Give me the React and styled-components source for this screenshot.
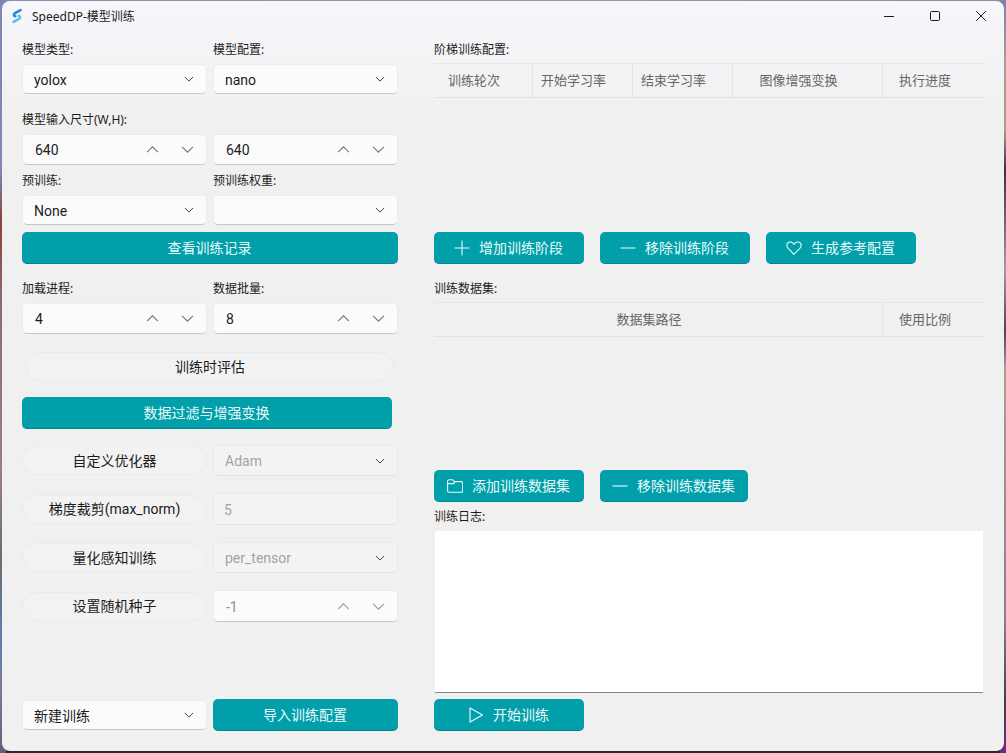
import React from 'react';
import styled, { createGlobalStyle } from 'styled-components';

const Global = createGlobalStyle`
  html, body { margin: 0; padding: 0; height: 100%; }
  body {
    width: 1006px; height: 753px; overflow: hidden;
    background-color: #2a2830;
    background-image:
      linear-gradient(to bottom, #7f86b5 0, #7f86b5 170px, #8c3f40 220px, #8e6a6a 300px, #9a8080 470px, #6d6d6d 560px, #5a7fb0 640px, #7b7a9a 690px, #6b5a7a 753px),
      linear-gradient(to bottom, #7a80b0 0, #a89e90 60px, #a89e90 130px, #3a3040 170px, #a89a9a 270px, #5a3a60 330px, #b09a9a 370px, #8a8080 620px, #404050 700px, #6a2a80 753px),
      linear-gradient(to right, #8a8ea8, #9a98a8 50%, #8a8ea8);
    background-repeat: no-repeat;
    background-size: 6px 753px, 6px 753px, 1006px 6px;
    background-position: left top, right top, left top;
    font-family: "Noto Sans", "Noto Sans CJK SC", sans-serif;
  }
  * { box-sizing: border-box; }
`;

const Win = styled.div`
  margin: 1px 2px 2px 2px; width: 1002px; height: 750px;
  display: flex; flex-direction: column; border-radius: 8px; overflow: hidden;
  background: linear-gradient(to bottom, #f6f6fb 0, #f3f3f5 70px, #f0f0f0 130px);
`;
const TitleBar = styled.header`
  height: 30px; display: flex; align-items: center; padding-left: 10px; flex: none;
`;
const TitleText = styled.span`
  margin-left: 10px; font-size: 12px; color: #1a1a1a; flex: 1;
`;
const WinBtn = styled.div`
  width: 46px; height: 30px; display: flex; align-items: center; justify-content: center; color: #1c1c1c;
`;
const Main = styled.main`
  flex: 1; display: flex; gap: 36px; padding: 9px 19px 20px 20px; min-height: 0;
`;
const LeftCol = styled.section`
  width: 376px; display: flex; flex-direction: column; flex: none;
`;
const RightCol = styled.section`
  width: 551px; display: flex; flex-direction: column; flex: none;
`;
const Pair = styled.div`
  display: grid; grid-template-columns: 185px 185px; column-gap: 6px; margin-top: ${p => p.$mt || 0}px;
`;
const Label = styled.label`
  display: block; height: 18px; line-height: 20px; font-size: 12px; color: #1c1c1c; margin-bottom: ${p => p.$mb ?? 6}px;
`;
const Control = styled.div`
  height: ${p => p.$h || 30}px; display: flex; align-items: center; border-radius: 5px;
  background: ${p => (p.$off ? '#f3f3f3' : '#fbfbfb')};
  border: 1px solid ${p => (p.$off ? '#e9e9e9' : '#ececec')};
  border-bottom-color: ${p => (p.$off ? '#e2e2e2' : '#c6c6c6')};
  font-family: Roboto, "Noto Sans CJK SC", sans-serif;
  font-size: 14px; color: ${p => (p.$off ? '#a3a3a3' : '#1c1c1c')};
`;
const Value = styled.span`
  flex: 1; padding: 1px 0 0 ${p => p.$pl || 11}px; line-height: 1; color: ${p => p.$tone || 'inherit'};
`;
const Caret = styled.span`
  width: 34px; flex: none; display: flex; justify-content: center; color: #444;
`;
const SpinBtn = styled.span`
  width: 35px; flex: none; display: flex; justify-content: center; color: ${p => (p.$off ? '#9b9b9b' : '#777')};
`;
const SpinPad = styled.span` width: 1px; flex: none; `;
const Primary = styled.button`
  height: 32px; width: ${p => (p.$w ? `${p.$w}px` : '100%')}; flex: none; margin-top: ${p => p.$mt || 0}px;
  display: flex; align-items: center; justify-content: center; gap: 9px;
  border: 0; border-bottom: 1px solid #07858f; border-radius: 5px; padding: 0 1px 2px 0;
  background: #009faa; color: #e9fbfb; font: inherit; font-size: 14px;
  svg { margin-top: 2px; }
`;
const Pill = styled.div`
  height: ${p => p.$h || 29}px; border-radius: 15px; display: flex; align-items: center; justify-content: center;
  background: #f2f2f2; border: 1px solid #ebebeb; font-family: Roboto, "Noto Sans CJK SC", sans-serif;
  font-size: 14px; color: #1c1c1c; padding-bottom: 2px;
  margin: ${p => p.$m || '0'};
`;
const OptRow = styled.div`
  display: grid; grid-template-columns: 185px 185px; column-gap: 6px; align-items: center; margin-top: ${p => p.$mt || 0}px;
`;
const Footer = styled.div`
  margin-top: auto; display: grid; grid-template-columns: 185px 185px; column-gap: 6px; align-items: center;
`;
const TableWrap = styled.div`
  height: ${p => p.$h}px; flex: none;
`;
const Head = styled.div`
  display: grid; grid-template-columns: ${p => p.$cols}; height: 35px;
  border-top: 1px solid #e6e6e6; border-bottom: 1px solid #e2e2e2;
`;
const HeadCell = styled.div`
  display: flex; align-items: center; justify-content: center; padding: 0 18px 3px 0;
  font-size: 13px; color: #666; border-right: 1px solid #e4e4e4;
  &:last-child { border-right: 0; }
`;
const BtnRow = styled.div`
  display: flex; gap: 16px; flex: none; margin-bottom: ${p => p.$mb || 0}px;
`;
const Log = styled.div`
  flex: 1; background: #fff; border-bottom: 1px solid #868686; margin: 0 2px 6px 1px; min-height: 0;
`;

const Chevron = ({ up, size = 10 }) => (
  <svg width={size} height={size} viewBox="0 0 12 12" fill="none" stroke="currentColor" strokeWidth={size > 10 ? 1 : 1.2}>
    <path d={up ? 'M1 8.5 6 3.5l5 5' : 'M1 3.5 6 8.5l5-5'} />
  </svg>
);
const Ico = ({ children }) => (
  <svg width="16" height="16" viewBox="0 0 16 16" fill="none" stroke="currentColor" strokeWidth="1.1">{children}</svg>
);

const Select = ({ value, off, h }) => (
  <Control $off={off} $h={h}>
    <Value>{value}</Value>
    <Caret><Chevron /></Caret>
  </Control>
);
const Spin = ({ value, off }) => (
  <Control $h={off ? 32 : 31}>
    <Value $pl={12} $tone={off ? '#8e8e8e' : undefined}>{value}</Value>
    <SpinBtn $off={off}><Chevron up size={13} /></SpinBtn>
    <SpinBtn $off={off}><Chevron size={13} /></SpinBtn>
    <SpinPad />
  </Control>
);

export default function App() {
  return (
    <>
      <Global />
      <Win>
        <TitleBar>
          <svg width="10" height="16" viewBox="0 0 10 16" fill="none" strokeLinecap="round">
            <path d="M8.5 2.2 3 5.2c-1.6 1-1.4 2.4.2 3" stroke="#2f86d6" strokeWidth="2.6" />
            <path d="M1.6 13.8 7 10.8c1.6-1 1.4-2.4-.2-3" stroke="#56c6ee" strokeWidth="2.6" />
          </svg>
          <TitleText>SpeedDP-模型训练</TitleText>
          <WinBtn>
            <svg width="10" height="10" viewBox="0 0 10 10" stroke="currentColor"><path d="M0 5.5h10" /></svg>
          </WinBtn>
          <WinBtn>
            <svg width="10" height="10" viewBox="0 0 10 10" fill="none" stroke="currentColor"><rect x=".5" y=".5" width="9" height="9" rx="1" /></svg>
          </WinBtn>
          <WinBtn>
            <svg width="10" height="10" viewBox="0 0 10 10" stroke="currentColor"><path d="M.3.3l9.4 9.4M9.7.3.3 9.7" /></svg>
          </WinBtn>
        </TitleBar>
        <Main>
          <LeftCol>
            <Pair>
              <div><Label>模型类型:</Label><Select value="yolox" /></div>
              <div><Label>模型配置:</Label><Select value="nano" /></div>
            </Pair>
            <Pair $mt={16}>
              <div><Label>模型输入尺寸(W,H):</Label><Spin value="640" /></div>
              <div><Label>&nbsp;</Label><Spin value="640" /></div>
            </Pair>
            <Pair $mt={6}>
              <div><Label>预训练:</Label><Select value="None" /></div>
              <div><Label>预训练权重:</Label><Select value="" /></div>
            </Pair>
            <Primary $mt={7}>查看训练记录</Primary>
            <Pair $mt={15}>
              <div><Label>加载进程:</Label><Spin value="4" /></div>
              <div><Label>数据批量:</Label><Spin value="8" /></div>
            </Pair>
            <Pill $h={29} $m="18px 4px 0 4px">训练时评估</Pill>
            <Primary $mt={16} $w={370}>数据过滤与增强变换</Primary>
            <OptRow $mt={16}>
              <Pill>自定义优化器</Pill>
              <Select value="Adam" off h={31} />
            </OptRow>
            <OptRow $mt={17}>
              <Pill>梯度裁剪(max_norm)</Pill>
              <Control $off $h={32}><Value $pl={10}>5</Value></Control>
            </OptRow>
            <OptRow $mt={17}>
              <Pill>量化感知训练</Pill>
              <Select value="per_tensor" off h={31} />
            </OptRow>
            <OptRow $mt={17}>
              <Pill>设置随机种子</Pill>
              <Spin value="-1" off />
            </OptRow>
            <Footer>
              <Select value="新建训练" />
              <Primary>导入训练配置</Primary>
            </Footer>
          </LeftCol>
          <RightCol>
            <Label $mb={5}>阶梯训练配置:</Label>
            <TableWrap $h={169}>
              <Head $cols="99px 100px 100px 150px 102px">
                <HeadCell>训练轮次</HeadCell>
                <HeadCell>开始学习率</HeadCell>
                <HeadCell>结束学习率</HeadCell>
                <HeadCell>图像增强变换</HeadCell>
                <HeadCell>执行进度</HeadCell>
              </Head>
            </TableWrap>
            <BtnRow $mb={15}>
              <Primary $w={150}>
                <Ico><path d="M8 .5v15M.5 8h15" /></Ico>增加训练阶段
              </Primary>
              <Primary $w={150}>
                <Ico><path d="M.5 8h15" /></Ico>移除训练阶段
              </Primary>
              <Primary $w={150}>
                <Ico><path d="M8 14.3 2 8.2C.4 6.5.5 4 2 2.7c1.6-1.3 4.2-1 6 1.6 1.8-2.6 4.4-2.9 6-1.6 1.5 1.3 1.6 3.8 0 5.5z" /></Ico>生成参考配置
              </Primary>
            </BtnRow>
            <Label $mb={5}>训练数据集:</Label>
            <TableWrap $h={168}>
              <Head $cols="449px 102px">
                <HeadCell>数据集路径</HeadCell>
                <HeadCell>使用比例</HeadCell>
              </Head>
            </TableWrap>
            <BtnRow $mb={5}>
              <Primary $w={150}>
                <Ico><path d="M.6 3.2c0-.9.6-1.5 1.5-1.5h3.4l1.7 1.9h7c.9 0 1.5.6 1.5 1.5v7.7c0 .9-.6 1.5-1.5 1.5H2.1c-.9 0-1.5-.6-1.5-1.5zM.6 5.6h6.2l1-2" /></Ico>添加训练数据集
              </Primary>
              <Primary $w={148}>
                <Ico><path d="M.5 8h15" /></Ico>移除训练数据集
              </Primary>
            </BtnRow>
            <Label $mb={6}>训练日志:</Label>
            <Log />
            <Primary $w={150}>
              <Ico><path d="M2 .9v14.2L14.5 8z" strokeLinejoin="round" /></Ico>开始训练
            </Primary>
          </RightCol>
        </Main>
      </Win>
    </>
  );
}
